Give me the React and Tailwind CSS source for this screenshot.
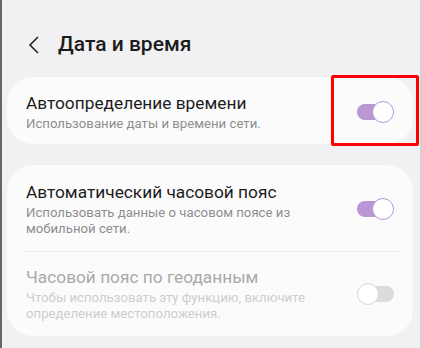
import React from 'react';

function Toggle({ on }) {
  if (on) {
    return (
      <div className="relative w-[37px] h-[22px] shrink-0">
        <div className="absolute left-0 top-[3px] w-[34px] h-[16px] rounded-full bg-[#bb96d5]" />
        <div className="absolute right-0 top-0 w-[22px] h-[22px] rounded-full bg-white border-[1.5px] border-[#bb96d5]" />
      </div>
    );
  }
  return (
    <div className="relative w-[37px] h-[22px] shrink-0">
      <div className="absolute right-0 top-[3px] w-[34px] h-[16px] rounded-full bg-[#dcdcdc]" />
      <div className="absolute left-0 top-0 w-[22px] h-[22px] rounded-full bg-white border-[1.5px] border-[#d4d4d4]" />
    </div>
  );
}

function Row({ title, sub, on, disabled }) {
  return (
    <div className="flex items-center justify-between">
      <div className="flex flex-col">
        <div className={'text-[17.3px] leading-[22px] ' + (disabled ? 'text-[#a9a9a9]' : 'text-[#1c1c1c]')}>{title}</div>
        <div className={'mt-[2px] text-[13.2px] leading-[16px] ' + (disabled ? 'text-[#cdcdcd]' : 'text-[#8e8e8e]')}>{sub}</div>
      </div>
      <Toggle on={on} />
    </div>
  );
}

export default function App() {
  return (
    <div
      className="relative w-[422px] h-[348px] overflow-hidden bg-[#f1f0f3] border-l-[2px] border-l-[#666] border-r-[2px] border-r-[#d2d2d2]"
      style={{ fontFamily: 'Roboto, "Noto Sans", sans-serif' }}
    >
      {/* header */}
      <div className="flex items-center h-[77px] pl-[26px] pt-[13px]">
        <svg width="12" height="18" viewBox="0 0 12 18" className="shrink-0">
          <polyline points="10,1 2,9 10,17" fill="none" stroke="#222" strokeWidth="1.6" />
        </svg>
        <div className="ml-[18px] text-[21px] font-medium text-[#1c1c1c]">Дата и время</div>
      </div>

      <div className="ml-[5px] mr-[7px] rounded-[26px] bg-[#fcfbfc] pl-[19px] pr-[19px] pt-[15px] pb-[12px]">
        <Row title="Автоопределение времени" sub="Использование даты и времени сети." on />
      </div>

      <div className="mt-[21px] ml-[5px] mr-[7px] rounded-[26px] bg-[#fcfbfc] pl-[19px] pr-[19px] pt-[16px] pb-[14px]">
        <Row
          title="Автоматический часовой пояс"
          sub={<>Использовать данные о часовом поясе из<br />мобильной сети.</>}
          on
        />
        <div className="mt-[14px] mb-[14px] ml-[-3px] mr-[-8px] h-px bg-[#ebeaec]" />
        <Row
          title="Часовой пояс по геоданным"
          sub={<>Чтобы использовать эту функцию, включите<br />определение местоположения.</>}
          disabled
        />
      </div>

      {/* highlight box */}
      <div className="absolute left-[329px] top-[75px] w-[88px] h-[71px] border-[3px] border-[#ff0000] rounded-[2px]" />
    </div>
  );
}
